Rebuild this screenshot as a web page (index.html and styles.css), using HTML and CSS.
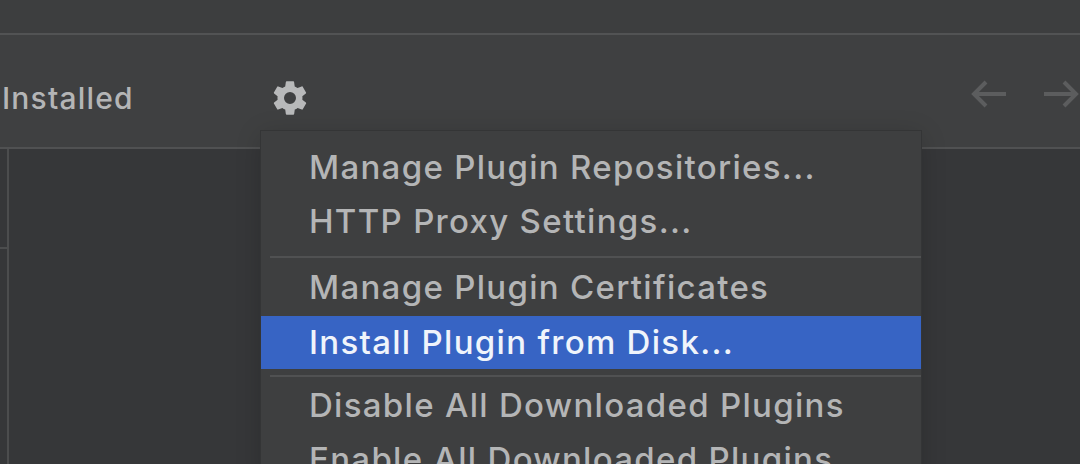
FILE: index.html
```html
<!DOCTYPE html>
<html lang="en">
<head>
    <meta charset="UTF-8">
    <title>Plugins</title>
    <link rel="stylesheet" href="styles.css">
</head>
<body>
    <div class="top-band"></div>
    <header class="toolbar">
        <span class="tab">Installed</span>
        <svg class="gear" viewBox="0 0 24 24" width="40" height="40">
            <path fill="#b8b9ba" fill-rule="evenodd" d="M19.4 13c.04-.32.07-.66.07-1s-.03-.68-.07-1l2.1-1.65c.2-.15.25-.42.12-.64l-2-3.46c-.12-.22-.39-.3-.61-.22l-2.49 1c-.52-.4-1.08-.73-1.69-.98l-.38-2.65A.49.49 0 0 0 14 2h-4c-.25 0-.46.18-.49.42l-.38 2.65c-.61.25-1.17.59-1.69.98l-2.49-1a.5.5 0 0 0-.61.22l-2 3.46c-.13.22-.07.49.12.64L4.56 11c-.04.32-.07.66-.07 1s.03.68.07 1l-2.1 1.65c-.2.15-.25.42-.12.64l2 3.46c.12.22.39.3.61.22l2.49-1c.52.4 1.08.73 1.69.98l.38 2.65c.03.24.24.42.49.42h4c.25 0 .46-.18.49-.42l.38-2.65c.61-.25 1.17-.59 1.69-.98l2.49 1c.23.09.49 0 .61-.22l2-3.46c.12-.22.07-.49-.12-.64L19.4 13zM12 15.6a3.6 3.6 0 1 1 0-7.2 3.6 3.6 0 0 1 0 7.2z"/>
        </svg>
        <div class="nav-arrows">
            <svg viewBox="0 0 36 28" width="36" height="28">
                <path fill="none" stroke="#5c5d5e" stroke-width="4" d="M35 14H3M15 2 3 14l12 12"/>
            </svg>
            <svg viewBox="0 0 36 28" width="36" height="28">
                <path fill="none" stroke="#5c5d5e" stroke-width="4" d="M1 14h32M21 2l12 12-12 12"/>
            </svg>
        </div>
    </header>
    <main class="content">
        <div class="side">
            <div class="side-top"></div>
        </div>
    </main>
    <div class="menu">
        <div class="menu-item">Manage Plugin Repositories...</div>
        <div class="menu-item">HTTP Proxy Settings...</div>
        <div class="menu-sep sep-one"></div>
        <div class="menu-item">Manage Plugin Certificates</div>
        <div class="menu-item selected">Install Plugin from Disk...</div>
        <div class="menu-sep sep-two"></div>
        <div class="menu-item">Disable All Downloaded Plugins</div>
        <div class="menu-item">Enable All Downloaded Plugins</div>
    </div>
</body>
</html>
```

FILE: styles.css
```css
body {
    margin: 0;
    height: 464px;
    overflow: hidden;
    position: relative;
    background-color: #363739;
    font-family: Inter, "Liberation Sans", sans-serif;
    font-weight: 500;
    color: #b4b5b6;
}
.top-band {
    height: 33px;
    background-color: #3d3e3f;
    border-bottom: 2px solid #525354;
}
.toolbar {
    height: 98px;
    padding-top: 14px;
    display: flex;
    align-items: center;
    background-color: #3f4041;
    border-bottom: 2px solid #505152;
}
.tab {
    margin-left: 2px;
    width: 268px;
    font-size: 30px;
    letter-spacing: 1.2px;
}
.nav-arrows {
    margin-left: auto;
    margin-right: 1px;
    margin-top: -8px;
    display: flex;
    gap: 36px;
}
.content {
    height: 315px;
    display: flex;
}
.side {
    width: 7px;
    border-right: 2px solid #4c4d4e;
}
.side-top {
    height: 98px;
    border-bottom: 2px solid #4c4d4e;
}
.menu {
    position: absolute;
    left: 261px;
    top: 131px;
    width: 660px;
    height: 340px;
    padding-top: 10px;
    background-color: #3e3f40;
    box-shadow: 0 0 0 1px #343536, 0 4px 24px rgba(0, 0, 0, 0.18);
}
.menu-item {
    height: 54px;
    line-height: 52px;
    padding-left: 48px;
    font-size: 33px;
    letter-spacing: 1.3px;
    white-space: nowrap;
}
.selected {
    margin-top: 1px;
    height: 53px;
    background-color: #3764c4;
    color: #f0f4fb;
}
.menu-sep {
    margin-left: 9px;
    border-top: 2px solid #505152;
}
.sep-one {
    margin-top: 7px;
    margin-bottom: 3px;
}
.sep-two {
    margin-top: 6px;
    margin-bottom: 2px;
}
```
